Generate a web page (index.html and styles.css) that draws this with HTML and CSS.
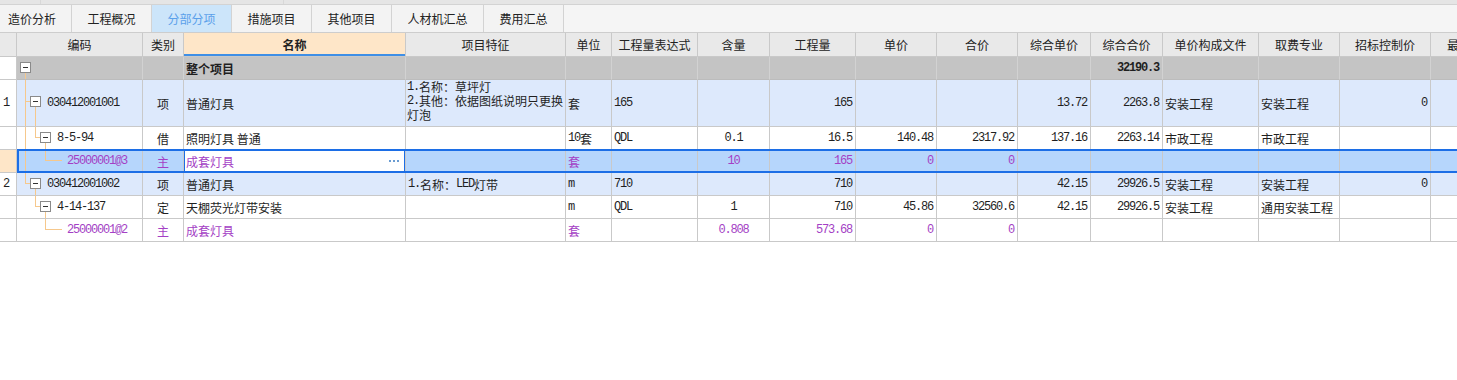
FILE: index.html
```html
<!DOCTYPE html>
<html lang="zh-CN">
<head>
<meta charset="utf-8">
<title>分部分项</title>
<link rel="stylesheet" href="styles.css">
</head>
<body>
<div class="topstrip"><span class="seg"></span><span class="seg wide"></span></div>
<nav class="tabs">
  <div class="tab first">造价分析</div>
  <div class="tab">工程概况</div>
  <div class="tab active">分部分项</div>
  <div class="tab">措施项目</div>
  <div class="tab">其他项目</div>
  <div class="tab wide">人材机汇总</div>
  <div class="tab">费用汇总</div>
</nav>

<div class="grid">
  <div class="row head">
    <div class="c"></div>
    <div class="c">编码</div>
    <div class="c">类别</div>
    <div class="c name">名称</div>
    <div class="c">项目特征</div>
    <div class="c">单位</div>
    <div class="c">工程量表达式</div>
    <div class="c">含量</div>
    <div class="c">工程量</div>
    <div class="c">单价</div>
    <div class="c">合价</div>
    <div class="c">综合单价</div>
    <div class="c">综合合价</div>
    <div class="c">单价构成文件</div>
    <div class="c">取费专业</div>
    <div class="c">招标控制价</div>
    <div class="c last">最高限价</div>
  </div>

  <div class="row gray">
    <div class="c idx"></div>
    <div class="c code">
      <svg class="tree" width="20" height="22">
        <line class="g" x1="8.5" y1="16" x2="8.5" y2="22"/>
        <rect class="bx" x="3.5" y="5.5" width="10" height="10"/>
        <line class="mn" x1="6" y1="10.5" x2="11" y2="10.5"/>
      </svg>
    </div>
    <div class="c"></div>
    <div class="c b">整个项目</div>
    <div class="c"></div>
    <div class="c"></div>
    <div class="c"></div>
    <div class="c"></div>
    <div class="c"></div>
    <div class="c"></div>
    <div class="c"></div>
    <div class="c"></div>
    <div class="c r n b">32190.3</div>
    <div class="c"></div>
    <div class="c"></div>
    <div class="c"></div>
    <div class="c"></div>
  </div>

  <div class="row blue tall">
    <div class="c idx n">1</div>
    <div class="c code">
      <svg class="tree" width="30" height="46">
        <line class="g" x1="8.5" y1="0" x2="8.5" y2="46"/>
        <line class="g" x1="8.5" y1="21.5" x2="13.5" y2="21.5"/>
        <line class="g" x1="18.5" y1="27" x2="18.5" y2="46"/>
        <rect class="bx" x="13.5" y="16.5" width="10" height="10"/>
        <line class="mn" x1="16" y1="21.5" x2="21" y2="21.5"/>
      </svg>
      <span class="n">030412001001</span>
    </div>
    <div class="c m">项</div>
    <div class="c">普通灯具</div>
    <div class="c desc">
      <div class="ln"><span class="n">1.</span>名称：草坪灯</div>
      <div class="ln"><span class="n">2.</span>其他：依据图纸说明只更换</div>
      <div class="ln">灯泡</div>
    </div>
    <div class="c">套</div>
    <div class="c n">165</div>
    <div class="c"></div>
    <div class="c r n">165</div>
    <div class="c"></div>
    <div class="c"></div>
    <div class="c r n">13.72</div>
    <div class="c r n">2263.8</div>
    <div class="c">安装工程</div>
    <div class="c">安装工程</div>
    <div class="c r n">0</div>
    <div class="c"></div>
  </div>

  <div class="row">
    <div class="c idx"></div>
    <div class="c code">
      <svg class="tree" width="40" height="22">
        <line class="g" x1="8.5" y1="0" x2="8.5" y2="22"/>
        <line class="g" x1="18.5" y1="0" x2="18.5" y2="10.5"/>
        <line class="g" x1="18.5" y1="10.5" x2="23.5" y2="10.5"/>
        <line class="g" x1="28.5" y1="16" x2="28.5" y2="22"/>
        <rect class="bx" x="23.5" y="5.5" width="10" height="10"/>
        <line class="mn" x1="26" y1="10.5" x2="31" y2="10.5"/>
      </svg>
      <span class="n">8-5-94</span>
    </div>
    <div class="c m">借</div>
    <div class="c">照明灯具 普通</div>
    <div class="c"></div>
    <div class="c"><span class="n">10</span>套</div>
    <div class="c n">QDL</div>
    <div class="c m n">0.1</div>
    <div class="c r n">16.5</div>
    <div class="c r n">140.48</div>
    <div class="c r n">2317.92</div>
    <div class="c r n">137.16</div>
    <div class="c r n">2263.14</div>
    <div class="c">市政工程</div>
    <div class="c">市政工程</div>
    <div class="c"></div>
    <div class="c"></div>
  </div>

  <div class="row sel">
    <div class="c idx"></div>
    <div class="c code">
      <svg class="tree" width="50" height="22">
        <line class="g" x1="8.5" y1="0" x2="8.5" y2="22"/>
        <line class="g" x1="28.5" y1="0" x2="28.5" y2="10.5"/>
        <line class="g" x1="28.5" y1="10.5" x2="45" y2="10.5"/>
      </svg>
      <span class="n p">25000001@3</span>
    </div>
    <div class="c m p">主</div>
    <div class="c name p"><span>成套灯具</span>
      <svg class="dots" width="10" height="2"><rect x="0" y="0" width="2" height="2"/><rect x="4" y="0" width="2" height="2"/><rect x="8" y="0" width="2" height="2"/></svg>
    </div>
    <div class="c"></div>
    <div class="c p">套</div>
    <div class="c"></div>
    <div class="c m n p">10</div>
    <div class="c r n p">165</div>
    <div class="c r n p">0</div>
    <div class="c r n p">0</div>
    <div class="c"></div>
    <div class="c"></div>
    <div class="c"></div>
    <div class="c"></div>
    <div class="c"></div>
    <div class="c"></div>
  </div>

  <div class="row blue">
    <div class="c idx n">2</div>
    <div class="c code">
      <svg class="tree" width="30" height="22">
        <line class="g" x1="8.5" y1="0" x2="8.5" y2="10.5"/>
        <line class="g" x1="8.5" y1="10.5" x2="13.5" y2="10.5"/>
        <line class="g" x1="18.5" y1="16" x2="18.5" y2="22"/>
        <rect class="bx" x="13.5" y="5.5" width="10" height="10"/>
        <line class="mn" x1="16" y1="10.5" x2="21" y2="10.5"/>
      </svg>
      <span class="n">030412001002</span>
    </div>
    <div class="c m">项</div>
    <div class="c">普通灯具</div>
    <div class="c"><span class="n">1.</span>名称：<span class="n">LED</span>灯带</div>
    <div class="c n">m</div>
    <div class="c n">710</div>
    <div class="c"></div>
    <div class="c r n">710</div>
    <div class="c"></div>
    <div class="c"></div>
    <div class="c r n">42.15</div>
    <div class="c r n">29926.5</div>
    <div class="c">安装工程</div>
    <div class="c">安装工程</div>
    <div class="c r n">0</div>
    <div class="c"></div>
  </div>

  <div class="row">
    <div class="c idx"></div>
    <div class="c code">
      <svg class="tree" width="40" height="22">
        <line class="g" x1="18.5" y1="0" x2="18.5" y2="10.5"/>
        <line class="g" x1="18.5" y1="10.5" x2="23.5" y2="10.5"/>
        <line class="g" x1="28.5" y1="16" x2="28.5" y2="22"/>
        <rect class="bx" x="23.5" y="5.5" width="10" height="10"/>
        <line class="mn" x1="26" y1="10.5" x2="31" y2="10.5"/>
      </svg>
      <span class="n">4-14-137</span>
    </div>
    <div class="c m">定</div>
    <div class="c">天棚荧光灯带安装</div>
    <div class="c"></div>
    <div class="c n">m</div>
    <div class="c n">QDL</div>
    <div class="c m n">1</div>
    <div class="c r n">710</div>
    <div class="c r n">45.86</div>
    <div class="c r n">32560.6</div>
    <div class="c r n">42.15</div>
    <div class="c r n">29926.5</div>
    <div class="c">安装工程</div>
    <div class="c">通用安装工程</div>
    <div class="c"></div>
    <div class="c"></div>
  </div>

  <div class="row">
    <div class="c idx"></div>
    <div class="c code">
      <svg class="tree" width="50" height="22">
        <line class="g" x1="28.5" y1="0" x2="28.5" y2="10.5"/>
        <line class="g" x1="28.5" y1="10.5" x2="45" y2="10.5"/>
      </svg>
      <span class="n p">25000001@2</span>
    </div>
    <div class="c m p">主</div>
    <div class="c p">成套灯具</div>
    <div class="c"></div>
    <div class="c p">套</div>
    <div class="c"></div>
    <div class="c m n p">0.808</div>
    <div class="c r n p">573.68</div>
    <div class="c r n p">0</div>
    <div class="c r n p">0</div>
    <div class="c"></div>
    <div class="c"></div>
    <div class="c"></div>
    <div class="c"></div>
    <div class="c"></div>
    <div class="c"></div>
  </div>
</div>
</body>
</html>
```

FILE: styles.css
```css
* { box-sizing: border-box; margin: 0; padding: 0; }
html, body { background: #fff; }
body {
  font-family: "Noto Sans CJK SC", "Noto Sans", sans-serif;
  font-size: 12px;
  color: #1f1f1f;
  width: 1457px;
  height: 380px;
  overflow: hidden;
}

/* top strip */
.topstrip {
  display: flex;
  height: 5px;
  background: #e5e5e5;
  border-bottom: 1px solid #d3d3d3;
}
.topstrip .seg { width: 41px; border-right: 1px solid #d8d8d8; }
.topstrip .seg.wide { width: 243px; }

/* tabs */
.tabs {
  display: flex;
  height: 28px;
  background: #f5f5f5;
  border-bottom: 1px solid #cdcdcd;
}
.tab {
  display: flex;
  align-items: center;
  justify-content: center;
  width: 80px;
  background: #f3f3f3;
  border-right: 1px solid #d3d3d3;
  color: #222;
  font-size: 12px;
}
.tab.first { width: 72px; justify-content: flex-start; padding-left: 8px; }
.tab.wide { width: 92px; }
.tab.active { background: #cce5fa; color: #5ba0ea; }

/* grid */
.grid { width: 1511px; }
.row {
  display: grid;
  grid-template-columns: 17px 126px 41px 222px 160px 46px 86px 72px 86px 81px 81px 73px 72px 96px 81px 91px 80px;
  height: 23px;
}
.row.head { height: 24px; }
.row.tall { height: 47px; }

.c {
  display: flex;
  align-items: center;
  padding: 0 2px;
  border-right: 1px solid #c9c9c9;
  border-bottom: 1px solid #c9c9c9;
  white-space: nowrap;
  overflow: hidden;
  background: #fff;
}
.c.r { justify-content: flex-end; padding-right: 3px; }
.c.m { justify-content: center; }
.c.b, .b { font-weight: 700; }
.c.idx { padding-left: 3px; background: #fff; }

.n {
  font-family: "Liberation Mono", "DejaVu Sans Mono", monospace;
  font-size: 12px;
  letter-spacing: -1.2px;
}
.p { color: #a43fc5; }

.head .c {
  justify-content: center;
  background: #e9e9e9;
  color: #222;
}
.head .c.last { justify-content: flex-start; padding-left: 16px; }
.head .c.name {
  background: #fee6c8;
  font-weight: 700;
  box-shadow: inset 0 -2px 0 #3f8fe6;
}

.gray .c {
  background: #c4c4c4;
  border-right-color: #d2d2d2;
  border-bottom-color: #bcbcbc;
}
.blue .c { background: #dde9fc; }
.row .c.idx { background: #fff; border-right-color: #c9c9c9; border-bottom-color: #c9c9c9; }

.c.desc {
  flex-direction: column;
  align-items: stretch;
  justify-content: flex-start;
  padding: 0 1px;
}
.desc .ln {
  display: flex;
  align-items: center;
  height: 14px;
  line-height: 14px;
}

/* tree */
.c.code { padding: 0; align-items: stretch; }
.c.code .n { display: flex; align-items: center; }
.tree { display: block; flex: none; shape-rendering: crispEdges; }
.tree .g { stroke: #f6c88c; stroke-width: 1; }
.tree .bx { fill: #fff; stroke: #8a8a8a; stroke-width: 1; }
.tree .mn { stroke: #333; stroke-width: 1; }

/* selected row */
.sel { position: relative; }
.sel .c { background: #b6d6fc; }
.sel .c.idx { background: #fee6c8; }
.sel .c.name {
  position: relative;
  background: #fff;
  justify-content: space-between;
  padding-right: 6px;
}
.sel .c.name::after {
  content: "";
  position: absolute;
  left: -1px;
  right: -1px;
  top: -1px;
  bottom: -1px;
  border: 2px solid #1c6ee6;
}
.sel::after {
  content: "";
  position: absolute;
  left: 17px;
  right: 0;
  top: -1px;
  bottom: 0;
  border: 2px solid #1c6ee6;
  border-right: 0;
  pointer-events: none;
}
.dots { display: block; flex: none; }
.dots rect { fill: #6a9cd2; }
```
